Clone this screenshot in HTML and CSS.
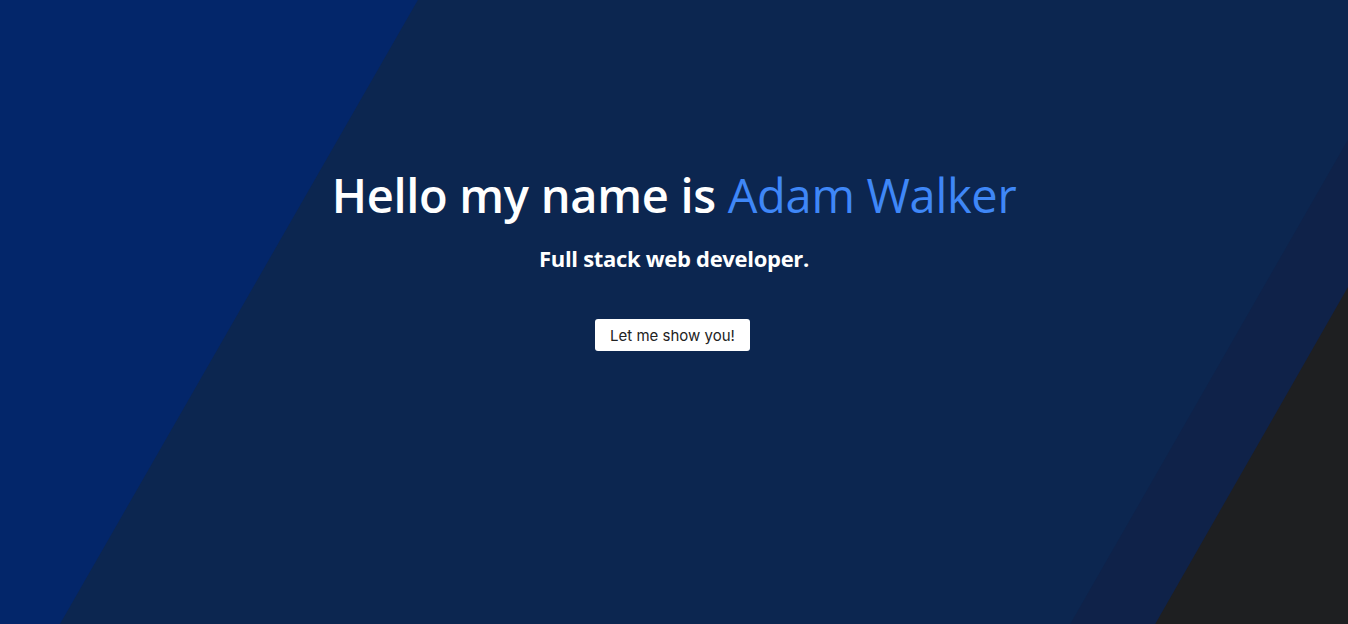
FILE: index.html
```html
<!DOCTYPE html>
<html lang="en">
<head>
<meta charset="utf-8">
<title>Adam Walker</title>
<link rel="stylesheet" href="styles.css">
</head>
<body>
<section class="hero">
  <div class="bg" aria-hidden="true">
    <div class="shape shape-left"></div>
    <div class="shape shape-strip"></div>
    <div class="shape shape-dark"></div>
  </div>
  <div class="content">
    <h1 class="title">Hello my name is <span class="name">Adam Walker</span></h1>
    <h2 class="subtitle">Full stack web developer.</h2>
    <button class="cta" type="button">Let me show you!</button>
  </div>
</section>
</body>
</html>
```
FILE: styles.css
```css
* { box-sizing: border-box; }
html, body { margin: 0; padding: 0; }
body {
  font-family: "Open Sans", "Noto Sans", sans-serif;
  background: #0c2650;
  color: #fff;
}
.hero {
  position: relative;
  height: 624px;
  overflow: hidden;
  background: #0c2650;
}
.bg { position: absolute; inset: 0; }
.shape { position: absolute; inset: 0; }
.shape-left {
  background: #03266a;
  clip-path: polygon(0 0, 31% 0, 4.45% 100%, 0 100%);
}
.shape-strip {
  background: #0f2249;
  clip-path: polygon(100% 22.4%, 100% 100%, 79.4% 100%);
}
.shape-dark {
  background: #1e1f21;
  clip-path: polygon(100% 46%, 100% 100%, 85.7% 100%);
}
.content {
  position: relative;
  display: flex;
  flex-direction: column;
  align-items: center;
  padding-top: 160px;
}
.title {
  margin: 0;
  font-size: 47px;
  font-weight: 600;
  line-height: 70px;
  letter-spacing: -0.3px;
}
.name { color: #3f87f7; font-weight: 400; }
.subtitle {
  margin: 13px 0 0;
  font-size: 22px;
  font-weight: 700;
  line-height: 30px;
  letter-spacing: -0.3px;
}
.cta {
  margin-top: 46px;
  margin-left: -3px;
  width: 155px;
  height: 32px;
  border: 0;
  border-radius: 3px;
  background: #fff;
  color: #222;
  font-family: "Inter", "Noto Sans", sans-serif;
  font-size: 15px;
  padding: 0;
}
```
